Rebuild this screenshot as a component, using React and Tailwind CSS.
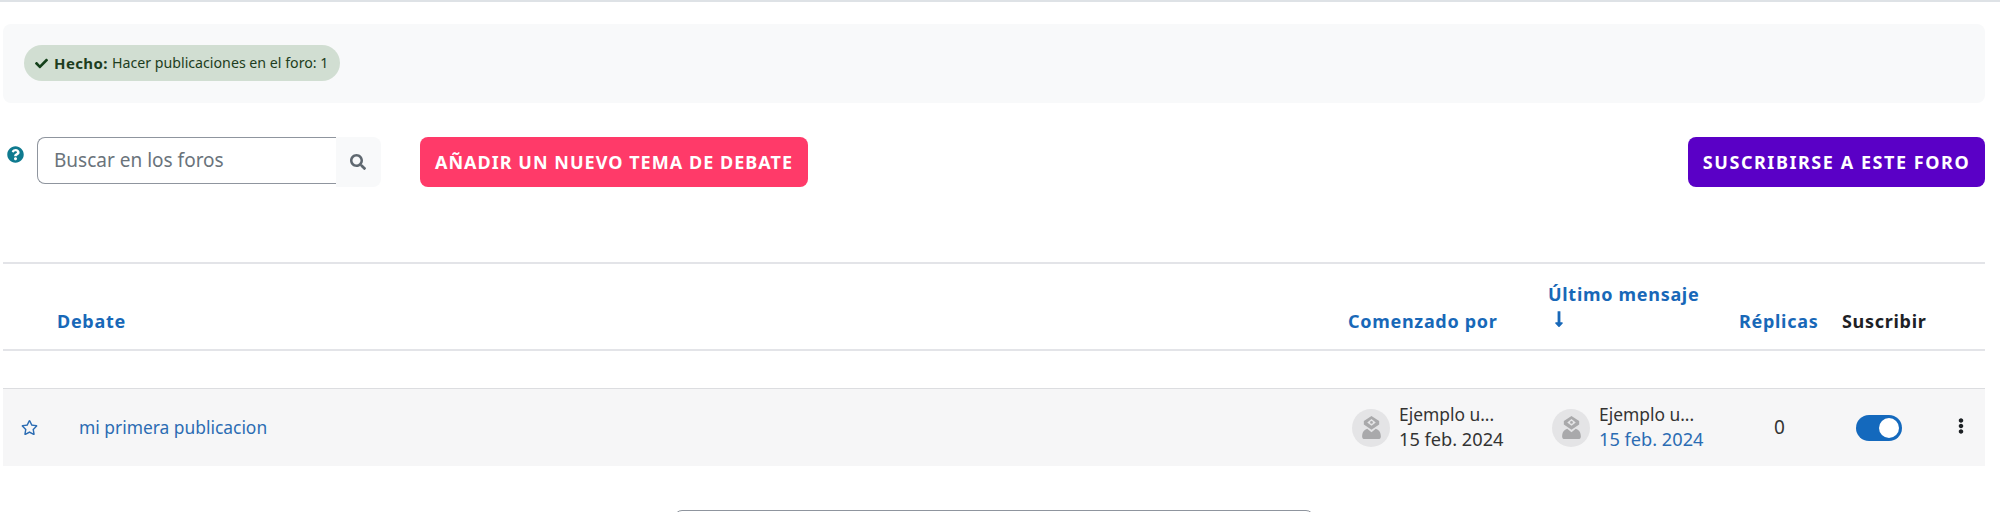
import { FaCheck, FaQuestionCircle, FaSearch, FaRegStar, FaEllipsisV, FaLongArrowAltDown } from 'react-icons/fa';

const font = 'font-["Noto_Sans","Liberation_Sans",sans-serif]';

function Avatar() {
    return (
        <div className="w-[38px] h-[38px] rounded-full bg-[#e4e4e6] flex items-center justify-center shrink-0">
            <svg width="19" height="23" viewBox="0 0 22 27">
                <path d="M11 0 L20 6 V10 L11 16 L2 10 V6 Z" fill="#a9a9ab" />
                <path d="M11 3.5 L16 7.5 L11 11.5 L6 7.5 Z" fill="#e4e4e6" />
                <circle cx="11" cy="7.5" r="1.6" fill="#a9a9ab" />
                <path d="M6 15 L11 19 L16 15 C19.5 16 22 19 22 24 C22 26 21 27 19 27 H3 C1 27 0 26 0 24 C0 19 2.5 16 6 15 Z" fill="#a9a9ab" />
            </svg>
        </div>
    );
}

function UserCell({ date, dateClass }) {
    return (
        <div className="flex items-center">
            <Avatar />
            <div className="ml-[9px] mb-[2px] text-[17.4px] leading-[25px] text-[#333333]">
                <div>Ejemplo u...</div>
                <div className={`text-[18.2px] ${dateClass}`}>{date}</div>
            </div>
        </div>
    );
}

export default function App() {
    return (
        <div className={`h-[512px] overflow-hidden bg-white ${font}`}>
            <div className="h-[2px] bg-[#dee2e6]" />
            <div className="pl-[3px] pr-[15px]">
                <div className="mt-[22px] h-[79px] bg-[#f8f9fa] rounded-lg pl-[21px] pt-[21px]">
                    <div className="inline-flex items-center h-[36px] w-[316px] rounded-full bg-[#d1ded2] pl-[11px] text-[#1d3d20] whitespace-nowrap">
                        <FaCheck className="text-[13px] text-[#14401a]" />
                        <span className="ml-[6px] text-[15px] font-bold tracking-[0.4px]">Hecho:</span>
                        <span className="ml-[4px] text-[14.2px]">Hacer publicaciones en el foro: 1</span>
                    </div>
                </div>

                <div className="mt-[34px] h-[50px] flex items-start">
                    <FaQuestionCircle className="mt-[9px] ml-[4px] text-[17px] text-[#0f7a8f] shrink-0" />
                    <div className="ml-[13px] w-[299px] h-[47px] border border-[#8f959e] border-r-0 rounded-l-lg flex items-center pl-[16px] text-[19px] text-[#6a737b]">
                        Buscar en los foros
                    </div>
                    <div className="w-[45px] h-[50px] bg-[#f8f9fa] rounded-r-lg flex items-center justify-center pr-[2px]">
                        <FaSearch className="text-[16px] text-[#5f6870]" />
                    </div>
                    <button className="ml-[39px] w-[388px] h-[50px] rounded-lg bg-[#ff3a69] text-white font-bold text-[18px] tracking-[1.03px] whitespace-nowrap">
                        AÑADIR UN NUEVO TEMA DE DEBATE
                    </button>
                    <button className="ml-auto w-[297px] h-[50px] rounded-lg bg-[#5a00c6] text-white font-bold text-[18px] tracking-[1.55px] whitespace-nowrap">
                        SUSCRIBIRSE A ESTE FORO
                    </button>
                </div>

                <div className="mt-[75px] h-[89px] border-y-2 border-[#e3e4e8] grid grid-cols-[1334px_200px_190px_103px_115px_40px] items-end pb-[12px] text-[18px] font-bold tracking-[0.7px] text-[#1868b8] leading-[32px]">
                    <div className="pl-[54px]">Debate</div>
                    <div className="pl-[11px] whitespace-nowrap">Comenzado por</div>
                    <div className="pl-[11px]">
                        <div className="whitespace-nowrap">Último mensaje</div>
                        <FaLongArrowAltDown className="ml-[2px] text-[18px] mb-[9px]" />
                    </div>
                    <div className="pl-[12px]">Réplicas</div>
                    <div className="pl-[12px] text-[#1d2125]">Suscribir</div>
                </div>

                <div className="mt-[37px] h-[78px] border-t border-[#dcdde0] bg-[#f6f6f7] grid grid-cols-[1334px_200px_190px_103px_115px_40px] items-center">
                    <div className="flex items-center text-[#2b6cb3]">
                        <FaRegStar className="ml-[18px] text-[17px]" />
                        <span className="ml-[41px] text-[17.4px]">mi primera publicacion</span>
                    </div>
                    <div className="pl-[15px]">
                        <UserCell date="15 feb. 2024" />
                    </div>
                    <div className="pl-[15px]">
                        <UserCell date="15 feb. 2024" dateClass="text-[#2b6cb3]" />
                    </div>
                    <div className="text-center pl-[2px] text-[19px] text-[#333333]">0</div>
                    <div className="pl-[26px]">
                        <div className="w-[46px] h-[26px] rounded-full bg-[#1469bd] flex items-center justify-end pr-[3px]">
                            <div className="w-[20px] h-[20px] rounded-full bg-white" />
                        </div>
                    </div>
                    <div className="pl-[8px] pb-[4px]">
                        <FaEllipsisV className="text-[16px] text-[#1d2125]" />
                    </div>
                </div>

                <div className="mt-[44px] flex justify-center">
                    <div className="w-[640px] h-[48px] border border-[#8f959e] rounded-lg" />
                </div>
            </div>
        </div>
    );
}
